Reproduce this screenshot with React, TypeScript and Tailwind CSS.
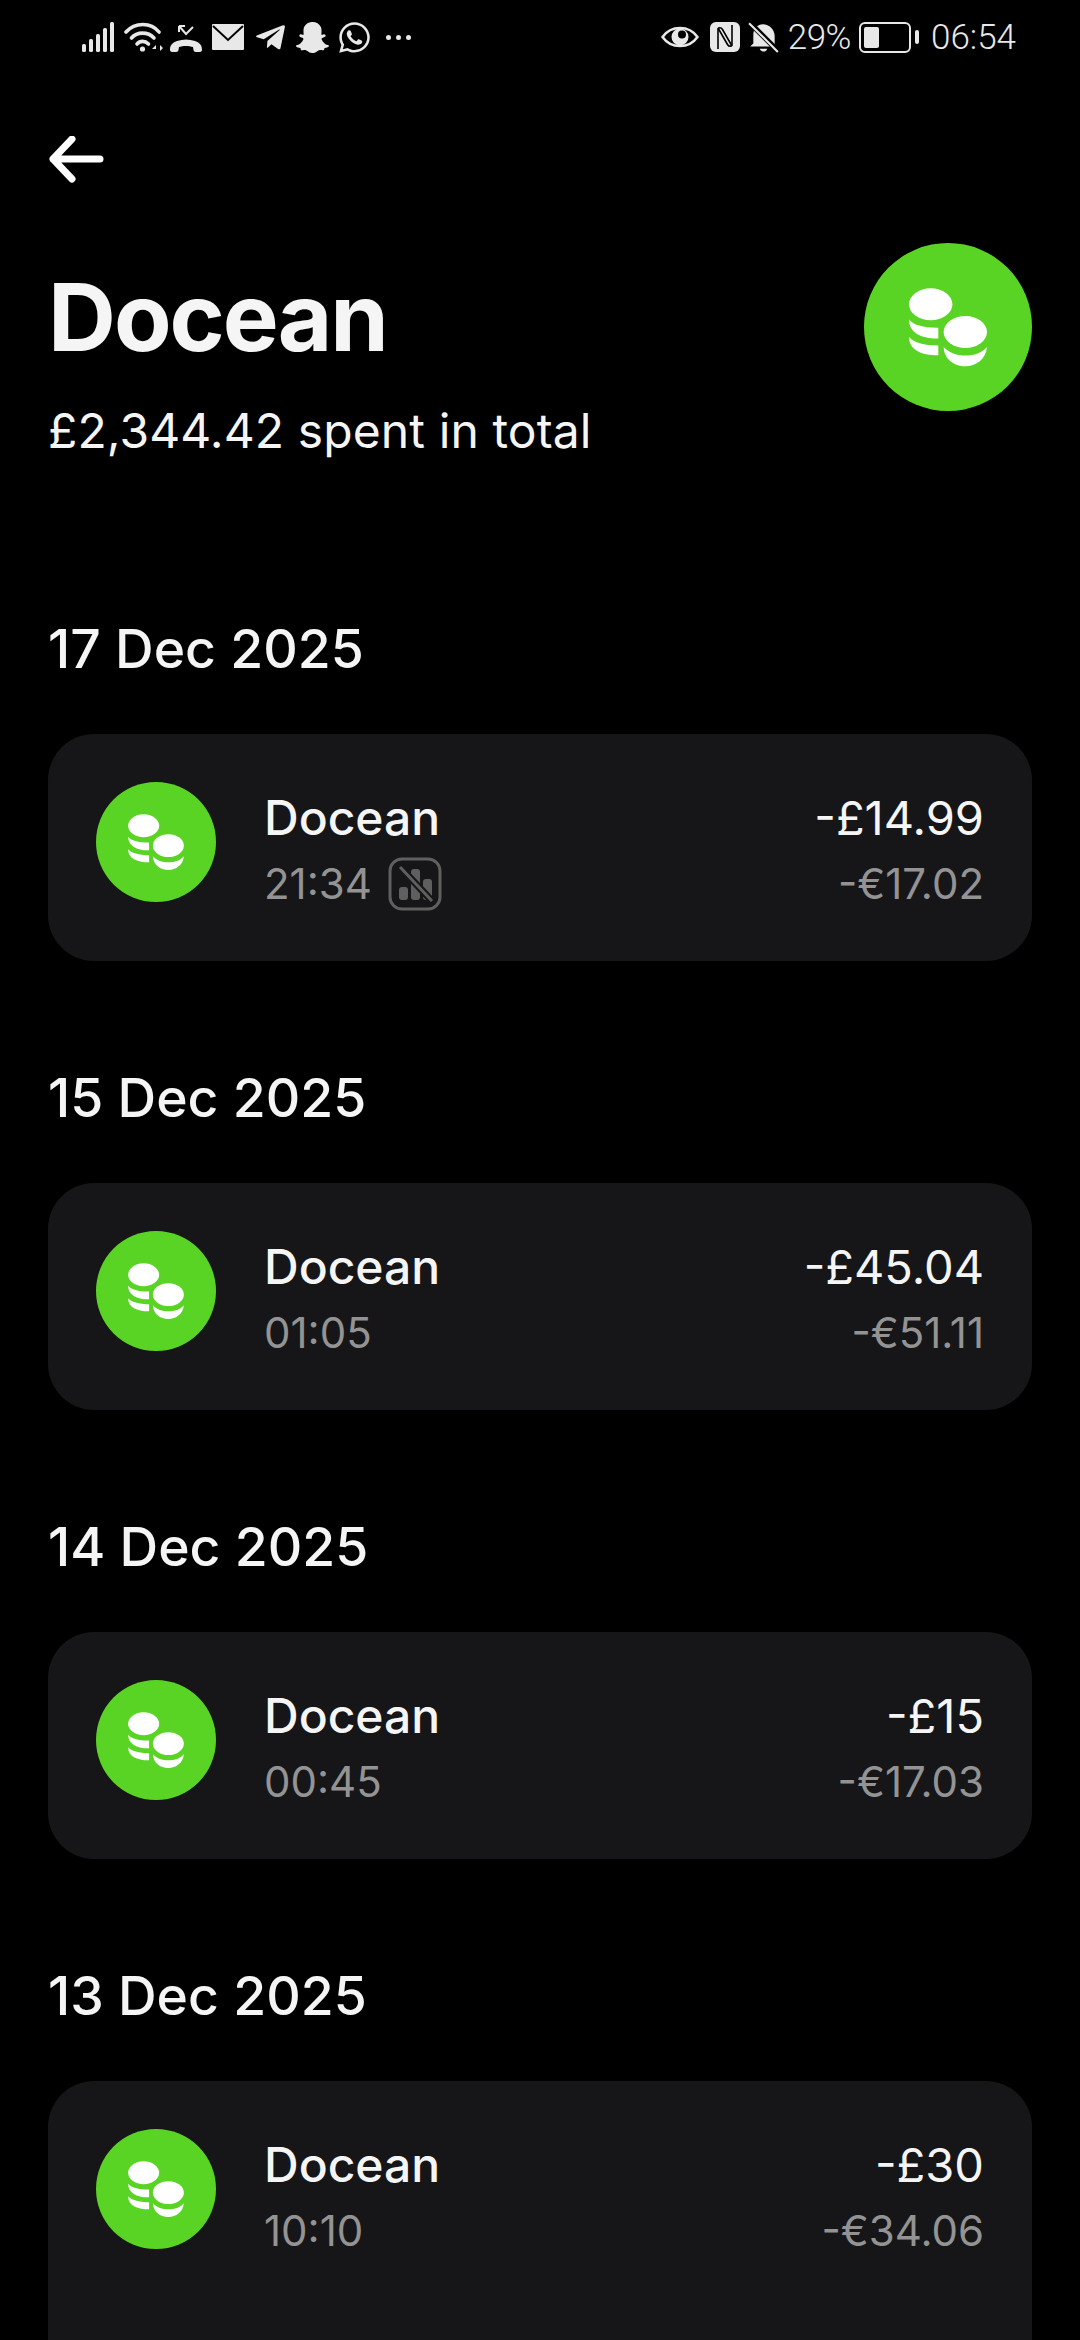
import { FaSnapchatGhost, FaTelegramPlane, FaWhatsapp } from 'react-icons/fa';

const transactions = [
    { date: '17 Dec 2025', time: '21:34', amount: '-£14.99', converted: '-€17.02', badge: true },
    { date: '15 Dec 2025', time: '01:05', amount: '-£45.04', converted: '-€51.11' },
    { date: '14 Dec 2025', time: '00:45', amount: '-£15', converted: '-€17.03' },
    { date: '13 Dec 2025', time: '10:10', amount: '-£30', converted: '-€34.06', more: true },
];

function Coins({ className }: { className: string }) {
    return (
        <svg viewBox="0 0 168 168" className={className} fill="#fff">
            <ellipse cx="66.7" cy="61.3" rx="21.7" ry="16" />
            <ellipse cx="101.3" cy="89" rx="21.7" ry="16" />
            <path d="M45 76.6C49 82 60 85 74.3 84.8V95.6C58 96 45 90 45 76.6Z" />
            <path d="M45 94C49 99 60 102.5 74.3 102.5V112.3C58 112.5 45 107 45 94Z" />
            <path d="M79.7 104C85 110 93 112.5 101.3 112.5C110 112.5 118 110 123 104C122 116 112 123.3 101.3 123.3C90 123.3 80 116 79.7 104Z" />
        </svg>
    );
}

function StatusBar() {
    return (
        <div className="flex h-[52px] items-center justify-between pl-[82px] pr-[64px] text-[#e8e8e8]">
            <div className="flex items-center">
                {/* signal */}
                <svg viewBox="0 0 34 32" className="h-[32px] w-[34px]" fill="#e8e8e8">
                    <rect x="0" y="23" width="4" height="8" rx="1.5" />
                    <rect x="7" y="18" width="4" height="13" rx="1.5" />
                    <rect x="14" y="13" width="4" height="18" rx="1.5" />
                    <rect x="21" y="7" width="4" height="24" rx="1.5" />
                    <rect x="28" y="1" width="4" height="30" rx="1.5" />
                </svg>
                {/* wifi */}
                <svg viewBox="0 0 40 32" className="ml-[8px] h-[32px] w-[40px]" fill="none" stroke="#e8e8e8" strokeWidth="3.6" strokeLinecap="round">
                    <path d="M2 11C11 1 27 1 35 11" />
                    <path d="M7.5 17C13 10.5 24 10.5 30 17" />
                    <path d="M13 23C16 19.5 21 19.5 24.5 23" />
                    <circle cx="18.5" cy="28" r="2.6" fill="#e8e8e8" stroke="none" />
                    <path d="M32 24l-4 4h4zM36 24l3 3-3 3z" fill="#e8e8e8" stroke="none" />
                </svg>
                {/* missed call */}
                <svg viewBox="0 0 32 32" className="ml-[6px] h-[32px] w-[32px]" fill="#e8e8e8">
                    <path d="M9 5l7 8 7-7" fill="none" stroke="#e8e8e8" strokeWidth="2" />
                    <path d="M9 5h6M9 5v6" fill="none" stroke="#e8e8e8" strokeWidth="2" />
                    <path d="M0 29C0 24 2 22 7 20C13 18 19 18 25 20C30 22 32 24 32 29C32 31 30 31 28 31C25 31 24 31 23.5 29L23 26C19 24.5 13 24.5 9 26L8.500 29C8 31 7 31 4 31C2 31 0 31 0 29Z" />
                </svg>
                {/* mail */}
                <svg viewBox="0 0 32 26" className="ml-[10px] h-[26px] w-[32px]">
                    <rect width="32" height="26" rx="1" fill="#e8e8e8" />
                    <path d="M1 2l15 14L31 2" fill="none" stroke="#000" strokeWidth="2" />
                </svg>
                <FaTelegramPlane className="ml-[10px] text-[33px]" />
                <FaSnapchatGhost className="ml-[9px] text-[33px]" />
                <FaWhatsapp className="ml-[8px] text-[35px]" />
                <div className="ml-[14px] flex gap-[5px]">
                    <span className="h-[5px] w-[5px] rounded-full bg-[#e8e8e8]" />
                    <span className="h-[5px] w-[5px] rounded-full bg-[#e8e8e8]" />
                    <span className="h-[5px] w-[5px] rounded-full bg-[#e8e8e8]" />
                </div>
            </div>
            <div className="flex items-center">
                {/* eye */}
                <svg viewBox="0 0 38 26" className="h-[26px] w-[38px]">
                    <path d="M1.500 13C10 1 28 1 36.500 13C28 25 10 25 1.500 13Z" fill="none" stroke="#e8e8e8" strokeWidth="2.500" />
                    <circle cx="19" cy="13" r="8.500" fill="#e8e8e8" />
                    <circle cx="21" cy="10.500" r="4" fill="#000" />
                </svg>
                {/* nfc */}
                <svg viewBox="0 0 30 30" className="ml-[11px] h-[30px] w-[30px]" fill="none" stroke="#000" strokeWidth="1.6">
                    <rect width="30" height="30" rx="6" fill="#e8e8e8" stroke="none" />
                    <path d="M8 27V8C8 5 11 5 12.500 7.500L22 24" />
                    <path d="M22 3V22C22 25 19 25 17.500 22.500L8 6" />
                </svg>
                {/* bell off */}
                <svg viewBox="0 0 30 30" className="ml-[8px] h-[32px] w-[32px]" fill="#e8e8e8">
                    <path d="M2 24l3-3V13C5 7 9 3 14 3C20 3 25 8 25 14V24Z" />
                    <path d="M11 26h7c-.5 3.500-6 3.500-7 0Z" />
                    <path d="M1 1l28 28" stroke="#000" strokeWidth="5" />
                    <path d="M1 2l27 27" stroke="#e8e8e8" strokeWidth="2" />
                </svg>
                <span className="ml-[8px] text-[35px] leading-none font-light font-['Roboto',sans-serif] tracking-[-0.5px]">29%</span>
                <div className="ml-[8px] flex items-center">
                    <div className="flex h-[31px] w-[52px] items-center rounded-[6px] border-[2px] border-[#e8e8e8] p-[3px]">
                        <div className="h-full w-[15px] rounded-[2px] bg-[#e8e8e8]" />
                    </div>
                    <div className="ml-[4px] h-[14px] w-[4px] rounded-[2px] bg-[#e8e8e8]" />
                </div>
                <span className="ml-[12px] text-[35px] leading-none font-light font-['Roboto',sans-serif]">06:54</span>
            </div>
        </div>
    );
}

export default function App() {
    return (
        <div className="h-[2340px] overflow-hidden bg-black pt-[11px] font-['Inter',sans-serif] text-white">
            <StatusBar />

            <div className="px-[48px]">
                {/* Back */}
                <svg viewBox="0 0 56 48" className="mt-[73px] ml-[1px] h-[48px] w-[56px]" fill="none" stroke="#fff" strokeWidth="7" strokeLinecap="round" strokeLinejoin="round">
                    <path d="M4 23H51M23 3L4 23L23 43" />
                </svg>

                {/* Header */}
                <div className="mt-[77px] flex items-start justify-between">
                    <div>
                        <h1 className="text-[94px] leading-[112px] font-bold text-[#f5f5f5] tracking-[-2px]">Docean</h1>
                        <p className="mt-[30px] text-[48px] leading-[56px] text-[#f5f5f5] tracking-[0.1px]">£2,344.42 spent in total</p>
                    </div>
                    <div className="mt-[-18px] flex h-[168px] w-[168px] items-center justify-center rounded-full bg-[#5ad424]">
                        <Coins className="h-[168px] w-[168px]" />
                    </div>
                </div>

                {/* Transactions */}
                <div className="mt-[53px]">
                    {transactions.map((t) => (
                        <div key={t.date} className="pt-[107px]">
                            <h2 className="text-[53.5px] leading-[60px] font-medium text-[#f5f5f5]">{t.date}</h2>
                            <div className={t.more ? 'mt-[55px] rounded-[46px] bg-[#161618] px-[48px] pb-[80px]' : 'mt-[55px] rounded-[46px] bg-[#161618] px-[48px]'}>
                                <div className="flex h-[227px] items-center justify-between">
                                    <div className="flex items-center gap-[48px]">
                                        <div className="mb-[12px] h-[120px] w-[120px] shrink-0 rounded-full bg-[#5ad424]">
                                            <Coins className="h-[120px] w-[120px]" />
                                        </div>
                                        <div className="pt-[5px]">
                                            <div className="text-[48px] leading-[56px] font-medium text-[#f5f5f5]">Docean</div>
                                            <div className="mt-[11px] flex h-[54px] items-center gap-[16px] text-[42px] text-[#939393]">
                                                {t.time}
                                                {t.badge && (
                                                    <svg viewBox="0 0 54 54" className="h-[54px] w-[54px]" fill="#5f5f5f">
                                                        <rect x="2" y="2" width="50" height="50" rx="12" fill="none" stroke="#5f5f5f" strokeWidth="3" />
                                                        <rect x="11" y="30" width="9" height="13" rx="3" />
                                                        <rect x="23" y="12" width="9" height="31" rx="3" />
                                                        <rect x="35" y="22" width="9" height="21" rx="3" />
                                                        <path d="M12 10L44 44" stroke="#161618" strokeWidth="7" />
                                                        <path d="M12 10L44 44" stroke="#5f5f5f" strokeWidth="3" />
                                                    </svg>
                                                )}
                                            </div>
                                        </div>
                                    </div>
                                    <div className="pt-[5px] text-right">
                                        <div className="text-[47px] leading-[56px] font-normal text-[#f5f5f5]">{t.amount}</div>
                                        <div className="mt-[11px] text-[42px] leading-[54px] text-[#939393]">{t.converted}</div>
                                    </div>
                                </div>
                            </div>
                        </div>
                    ))}
                </div>
            </div>
        </div>
    );
}
